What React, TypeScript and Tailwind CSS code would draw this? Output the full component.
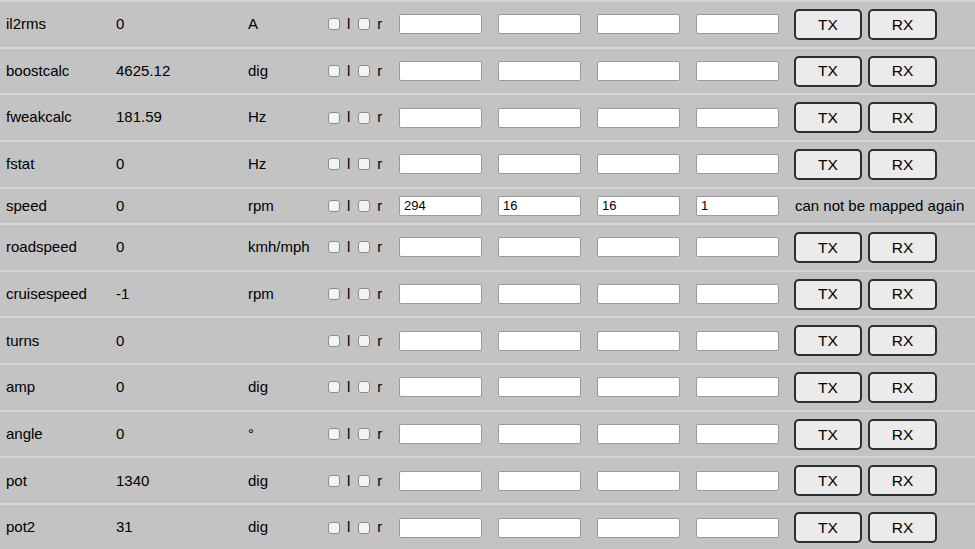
const rows: { name: string; value: string; unit: string; fixed?: string[] }[] = [
  { name: "il2rms", value: "0", unit: "A" },
  { name: "boostcalc", value: "4625.12", unit: "dig" },
  { name: "fweakcalc", value: "181.59", unit: "Hz" },
  { name: "fstat", value: "0", unit: "Hz" },
  { name: "speed", value: "0", unit: "rpm", fixed: ["294", "16", "16", "1"] },
  { name: "roadspeed", value: "0", unit: "kmh/mph" },
  { name: "cruisespeed", value: "-1", unit: "rpm" },
  { name: "turns", value: "0", unit: "" },
  { name: "amp", value: "0", unit: "dig" },
  { name: "angle", value: "0", unit: "°" },
  { name: "pot", value: "1340", unit: "dig" },
  { name: "pot2", value: "31", unit: "dig" },
];

const Box = () => (
  <span className="inline-block w-[12px] h-[12px] rounded-[3px] border border-[#8c8c8c] bg-[#f4f4f4]" />
);

const Field = ({ value }: { value?: string }) => (
  <div className="w-[83px] h-[20px] rounded-[2px] border border-[#9a9a9a] bg-white text-[13px] leading-[18px] pl-[4px] text-black">
    {value}
  </div>
);

const Btn = ({ label, w }: { label: string; w: string }) => (
  <button className={`${w} h-[31px] rounded-[5px] border-2 border-[#2e2e2e] bg-[#ebebeb] text-[15.5px] text-black`}>
    {label}
  </button>
);

export default function App() {
  return (
    <div
      className="w-[975px] h-[549px] overflow-hidden bg-[#c3c3c3] text-[15px] text-black"
      style={{ fontFamily: '"Liberation Sans", Arial, sans-serif' }}
    >
      {rows.map((r) => (
        <div
          key={r.name}
          className={`flex items-center border-t-2 border-[#d5d5d5] box-border ${
            r.fixed ? "h-[36.3px]" : "h-[46.7px]"
          }`}
        >
          {/* name / value / unit */}
          <div className="w-[116px] pl-[6px]">{r.name}</div>
          <div className="w-[132px]">{r.value}</div>
          <div className="w-[80px]">{r.unit}</div>

          {/* l / r flags */}
          <div className="w-[71px] flex items-center">
            <Box />
            <span className="ml-[7px]">l</span>
            <span className="ml-[8px] flex"><Box /></span>
            <span className="ml-[7px]">r</span>
          </div>

          <div className="flex gap-4">
            <Field value={r.fixed?.[0]} />
            <Field value={r.fixed?.[1]} />
            <Field value={r.fixed?.[2]} />
            <Field value={r.fixed?.[3]} />
          </div>

          {r.fixed ? (
            <div className="ml-[16px]">can not be mapped again</div>
          ) : (
            <div className="ml-[15px] flex gap-[6px]">
              <Btn label="TX" w="w-[68px]" />
              <Btn label="RX" w="w-[69px]" />
            </div>
          )}
        </div>
      ))}
    </div>
  );
}
